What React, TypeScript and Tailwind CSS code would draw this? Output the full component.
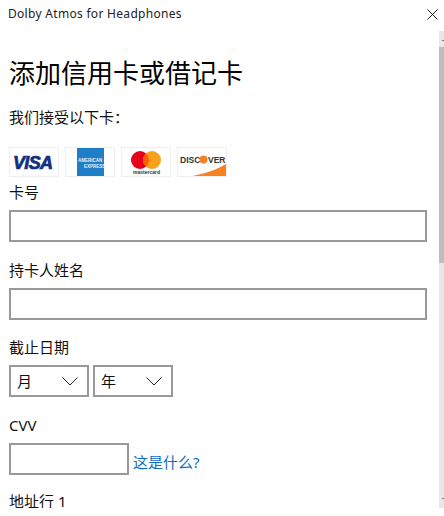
const FONT = "font-['Noto_Sans','Noto_Sans_CJK_SC',sans-serif]";

function Label({ children, className = "" }: { children: React.ReactNode; className?: string }) {
  return <div className={`h-[20px] text-[15px] leading-[20px] text-[#111] ${className}`}>{children}</div>;
}

function Field({ className = "" }: { className?: string }) {
  return <div className={`h-[32px] border-2 border-[#999] bg-white ${className}`} />;
}

function Select({ label }: { label: string }) {
  return (
    <div className="flex h-[32px] w-[80px] items-center justify-between border-2 border-[#999] bg-white pl-[6px] pr-[9px] text-[15px] text-[#111]">
      <span>{label}</span>
      <svg width="16" height="9" viewBox="0 0 16 9" fill="none" stroke="#222" strokeWidth="1">
        <path d="M0.5 0.5 L8 8 L15.5 0.5" />
      </svg>
    </div>
  );
}

function Card({ children }: { children: React.ReactNode }) {
  return <div className="flex h-[30px] w-[50px] items-center justify-center overflow-hidden border border-[#f0f0f0] bg-white">{children}</div>;
}

const LOGO = { fontFamily: "'Liberation Sans', sans-serif", fontWeight: 700 } as const;

function Visa() {
  return (
    <svg width="48" height="28" viewBox="0 0 48 28">
      <text x="3" y="21" fontSize="18" fontStyle="italic" fill="#12307f" stroke="#12307f" strokeWidth="0.7" textLength="40" lengthAdjust="spacing" style={LOGO}>VISA</text>
    </svg>
  );
}

function Amex() {
  return (
    <svg width="48" height="28" viewBox="0 0 48 28">
      <rect x="11" y="0" width="27" height="28" fill="#1f7fc6" />
      <text x="12" y="14" fontSize="4.5" fill="#e6f1fa" style={LOGO}>AMERICAN</text>
      <text x="18" y="20" fontSize="4.5" fill="#e6f1fa" style={LOGO}>EXPRESS</text>
    </svg>
  );
}

function Master() {
  return (
    <svg width="48" height="28" viewBox="0 0 48 28">
      <circle cx="18" cy="12" r="9" fill="#e9001b" />
      <circle cx="30" cy="12" r="9" fill="#f9a01b" />
      <path d="M24 5.3 A9 9 0 0 1 24 18.7 A9 9 0 0 1 24 5.3 Z" fill="#ff5f00" />
      <text x="11" y="26" fontSize="5" fill="#333" style={LOGO}>mastercard</text>
    </svg>
  );
}

function Discover() {
  return (
    <svg width="48" height="28" viewBox="0 0 48 28">
      <text x="2" y="15" fontSize="8.5" fill="#333" style={LOGO}>DISC</text>
      <circle cx="25.5" cy="11.5" r="4" fill="#f58220" />
      <text x="30" y="15" fontSize="8.5" fill="#333" style={LOGO}>VER</text>
      <path d="M15 28 C28 25 38 22 48 16 V28 Z" fill="#f58220" />
    </svg>
  );
}

export default function App() {
  return (
    <div className={`flex h-[516px] w-[444px] flex-col overflow-hidden bg-white ${FONT}`}>
      <div className="flex h-[31px] shrink-0 items-start justify-between pl-[8px] pr-[6px]">
        <span className="mt-[5px] text-[12px] leading-[18px] tracking-[0.3px] text-[#222]">Dolby Atmos for Headphones</span>
        <svg className="mt-[9px]" width="11" height="11" viewBox="0 0 11 11" stroke="#222" strokeWidth="1" fill="none">
          <path d="M0.5 0.5 L10.5 10.5 M10.5 0.5 L0.5 10.5" />
        </svg>
      </div>
      <div className="flex h-[477px] shrink-0">
        <div className="min-w-0 flex-1 overflow-hidden pl-[9px]">
          <h1 className="mt-[23px] text-[26px] font-normal leading-[38px] text-black">添加信用卡或借记卡</h1>
          <Label className="mt-[15px]">我们接受以下卡：</Label>
          <div className="mt-[20px] flex gap-[6px]">
            <Card><Visa /></Card>
            <Card><Amex /></Card>
            <Card><Master /></Card>
            <Card><Discover /></Card>
          </div>
          <Label className="mt-[5px]">卡号</Label>
          <Field className="mt-[8px] w-[418px]" />
          <Label className="mt-[18px]">持卡人姓名</Label>
          <Field className="mt-[8px] w-[418px]" />
          <Label className="mt-[17px]">截止日期</Label>
          <div className="mt-[8px] flex gap-[4px]">
            <Select label="月" />
            <Select label="年" />
          </div>
          <Label className="mt-[18px]">CVV</Label>
          <div className="mt-[8px] flex items-end gap-[4px]">
            <Field className="w-[120px]" />
            <a className="text-[15px] leading-[26px] text-[#106ebe]">这是什么?</a>
          </div>
          <Label className="mt-[16px]">地址行 1</Label>
        </div>
        <div className="flex w-[5px] shrink-0 flex-col bg-[#e8e8e8]">
          <div className="flex h-[16px] items-center justify-end pt-[2px]">
            <div className="h-px w-[2px] bg-[#777]" />
          </div>
          <div className="h-[216px] shrink-0 bg-[#bdbdbd]" />
          <div className="flex flex-1 items-end justify-end pb-[9px]">
            <div className="h-px w-[2px] bg-[#777]" />
          </div>
        </div>
      </div>
    </div>
  );
}
